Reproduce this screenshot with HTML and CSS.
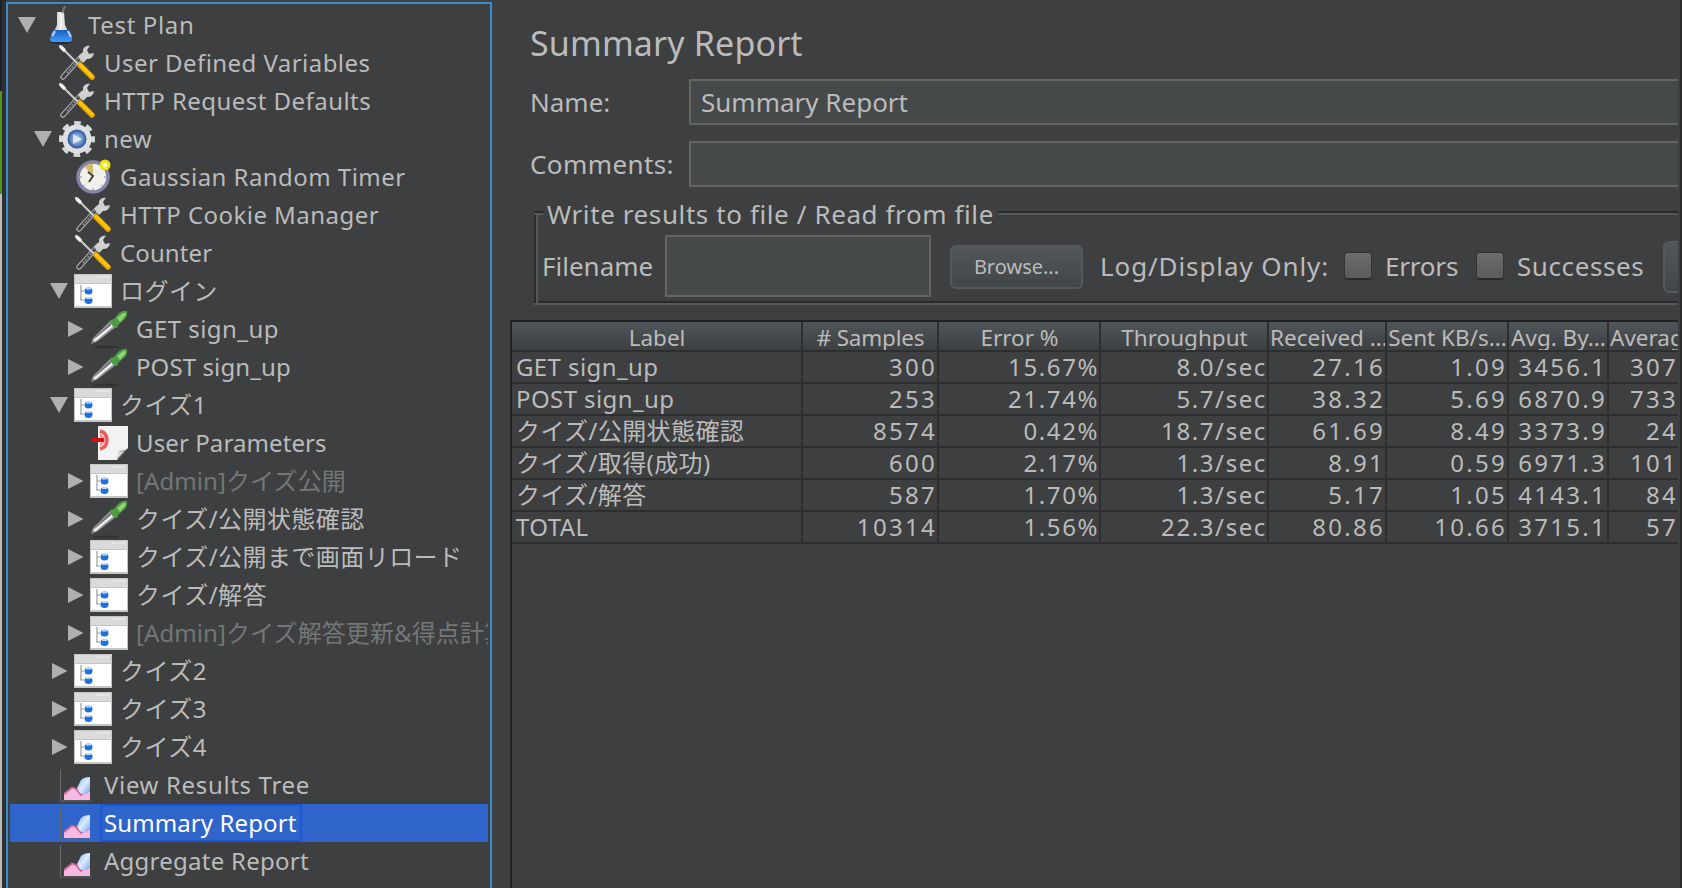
FILE: index.html
```html
<!DOCTYPE html>
<html lang="ja">

<head>
    <meta charset="UTF-8">
    <title>Summary Report</title>
    <link rel="stylesheet" href="styles.css">
</head>

<body>

    <!-- Icons -->
    <svg class="defs">
        <defs>
            <linearGradient id="blue" x1="0" y1="0" x2="0" y2="1">
                <stop offset="0" stop-color="#1b5fc0" />
                <stop offset="1" stop-color="#3d9cff" />
            </linearGradient>
            <linearGradient id="sky" x1="0" y1="0" x2="1" y2="1">
                <stop offset="0" stop-color="#7fb0ee" />
                <stop offset="0.5" stop-color="#dcecff" />
                <stop offset="1" stop-color="#6f9fe6" />
            </linearGradient>
            <linearGradient id="glass" x1="0" y1="0" x2="1" y2="0">
                <stop offset="0" stop-color="#9a9c9c" />
                <stop offset="0.5" stop-color="#f2f2f2" />
                <stop offset="1" stop-color="#a8aaaa" />
            </linearGradient>
            <radialGradient id="ball">
                <stop offset="0" stop-color="#b9cdea" />
                <stop offset="0.6" stop-color="#6b91c9" />
                <stop offset="1" stop-color="#27509b" />
            </radialGradient>
        </defs>
        <symbol id="down" viewBox="0 0 18 18"><path d="M0 1h18L9 17z" fill="#afb1b1" /></symbol>
        <symbol id="right" viewBox="0 0 18 18"><path d="M2 1l15.500 8L2 17z" fill="#afb1b1" /></symbol>
        <symbol id="flask" viewBox="0 0 38 38">
            <ellipse cx="19" cy="36" rx="11" ry="2" fill="#252c38" />
            <path d="M15 6h7l1 13 7 14q0 3-5 3H13q-5 0-5-3l7-14z" fill="url(#glass)" />
            <path d="M12 24h14l4 9q0 3-5 3H13q-5 0-5-3z" fill="url(#blue)" />
            <path d="M10 30l3-5M26 25l3 6" stroke="#9dc9ff" stroke-width="2.500" />
            <path d="M20 7l3-7" stroke="#77797a" stroke-width="2" />
        </symbol>
        <symbol id="tools" viewBox="0 0 38 38">
            <path d="M5 33L24 12" stroke="#a7a9a9" stroke-width="5.500" stroke-linecap="round" />
            <path d="M5 33L22 14" stroke="#3a3c3e" stroke-width="3" stroke-linecap="round" />
            <path d="M9 29L21 15" stroke="#a7a9a9" stroke-width="1.200" stroke-dasharray="2 1.500" />
            <path d="M20 13l5-5q-1-6 7-6.500l-3 4.500 2 4 5-1q-1 6-7 6l-4 4z" fill="#cfd1d1" />
            <path d="M2 2l18 18" stroke="#c8caca" stroke-width="2.200" stroke-linecap="round" />
            <path d="M3 3l3 3" stroke="#f2f2f2" stroke-width="3.500" stroke-linecap="round" />
            <path d="M22 21l12 12" stroke="#e8a400" stroke-width="5.500" stroke-linecap="round" />
            <path d="M22 20.500l12 12" stroke="#ffc61a" stroke-width="2.500" stroke-linecap="round" />
        </symbol>
        <symbol id="gear" viewBox="0 0 38 38">
            <circle cx="19" cy="19" r="15.500" fill="none" stroke="#d5d6d7" stroke-width="5" stroke-dasharray="6.500 5.673" stroke-dashoffset="3.250" />
            <circle cx="19" cy="19" r="14.500" fill="#dedfe0" />
            <circle cx="19" cy="19" r="9.500" fill="url(#ball)" />
            <path d="M15 14l9 5-9 5z" fill="#dfe8f4" />
        </symbol>
        <symbol id="timer" viewBox="0 0 38 38">
            <circle cx="19" cy="19" r="15" fill="#f1f0ec" stroke="#8484a6" stroke-width="3.500" />
            <path d="M19 19L11 9q4-4 8-3z" fill="#d6b869" />
            <path d="M14 14l5 4-4 6" stroke="#44443f" stroke-width="2" fill="none" />
            <path d="M19 30v2M30 19h2M6 19h2M10 28l1-1M28 28l-1-1" stroke="#aaa" stroke-width="1.500" />
            <circle cx="31" cy="7" r="5.500" fill="#eee013" />
            <circle cx="31" cy="7" r="2.500" fill="#fffbb0" />
        </symbol>
        <symbol id="tree-icon" viewBox="0 0 38 38">
            <path d="M0 2h38v34H0z" fill="#c4c5c5" />
            <path d="M1 3h36v8H1z" fill="#dadada" />
            <path d="M1 12h36v22H1z" fill="#fff" />
            <path d="M22 5h13" stroke="#f0f0f0" stroke-width="1.500" stroke-dasharray="2 1.500" />
            <path d="M7 13v15M7 19h3M6 28h4" stroke="#9a9a9a" stroke-width="1.200" fill="none" />
            <ellipse cx="14.500" cy="19" rx="4" ry="3.500" fill="#1d71df" />
            <ellipse cx="14.500" cy="28.500" rx="4" ry="3.500" fill="#1d71df" />
            <path d="M12 16.500h5M12 26h5" stroke="#b5d8ff" stroke-width="2" />
        </symbol>
        <symbol id="dropper" viewBox="0 0 38 38">
            <ellipse cx="16" cy="37" rx="13" ry="1.500" fill="#303234" />
            <path d="M1 34l2-6L20 11l6 6L8 31z" fill="#8f9191" />
            <path d="M6 28L21 14.500" stroke="#4a4c4d" stroke-width="1.200" />
            <path d="M4 31L23 15" stroke="#efefef" stroke-width="2.500" />
            <path d="M20 10l4-1 5-6q5-3 8-2 1 4-2 8l-6 5-2 4q-6-1-7-8z" fill="#4f9c44" />
            <path d="M27 8l6-5q3-1 3 2l-6 7z" fill="#8ed272" />
        </symbol>
        <symbol id="params" viewBox="0 0 38 38">
            <path d="M8 2h30v22l-11 12H8z" fill="#f2f2f2" />
            <path d="M38 24q-3 3-9 3l-2 9z" fill="#77797a" />
            <path d="M34 27q-4 1-6 0 1 3-1 8z" fill="#ddd" />
            <path d="M10 7q7 2 7 9t-7 9" stroke="#ea5b5b" stroke-width="3.500" fill="none" />
            <path d="M1 16h12" stroke="#cf1010" stroke-width="4" />
            <path d="M10 9l7 7-7 7z" fill="#ef7070" opacity=".7" />
            <path d="M3 16h11" stroke="#cf1010" stroke-width="3.500" />
        </symbol>
        <symbol id="graph" viewBox="0 0 38 38">
            <path d="M2.500 3v32H34" stroke="#646668" stroke-width="1.200" fill="none" />
            <path d="M6 34v-7l9-6 6 3 6 4 5-3v9z" fill="#f5b9e4" />
            <path d="M6 28l8-6.500 4 1.500 5 6 8-4" stroke="#c9608e" stroke-width="1.800" fill="none" />
            <path d="M19 22l4-8q3-3 9-3v14l-6 4-4-2z" fill="url(#sky)" />
        </symbol>
    </svg>

    <div class="app">
        <div class="edge">
            <div class="edge-dark"></div>
            <div class="edge-green"></div>
            <div class="edge-light"></div>
        </div>

        <ul class="tree">
            <li class="l0 wide"><svg class="arrow"><use href="#down" /></svg><svg class="icon"><use href="#flask" /></svg><span>Test Plan</span></li>
            <li class="l1"><i class="arrow"></i><svg class="icon"><use href="#tools" /></svg><span>User Defined Variables</span></li>
            <li class="l1"><i class="arrow"></i><svg class="icon"><use href="#tools" /></svg><span>HTTP Request Defaults</span></li>
            <li class="l1"><svg class="arrow"><use href="#down" /></svg><svg class="icon"><use href="#gear" /></svg><span>new</span></li>
            <li class="l2"><i class="arrow"></i><svg class="icon"><use href="#timer" /></svg><span>Gaussian Random Timer</span></li>
            <li class="l2"><i class="arrow"></i><svg class="icon"><use href="#tools" /></svg><span>HTTP Cookie Manager</span></li>
            <li class="l2 tight"><i class="arrow"></i><svg class="icon"><use href="#tools" /></svg><span>Counter</span></li>
            <li class="l2"><svg class="arrow"><use href="#down" /></svg><svg class="icon"><use href="#tree-icon" /></svg><span>ログイン</span></li>
            <li class="l3"><svg class="arrow"><use href="#right" /></svg><svg class="icon"><use href="#dropper" /></svg><span>GET sign_up</span></li>
            <li class="l3 tight"><svg class="arrow"><use href="#right" /></svg><svg class="icon"><use href="#dropper" /></svg><span>POST sign_up</span></li>
            <li class="l2"><svg class="arrow"><use href="#down" /></svg><svg class="icon"><use href="#tree-icon" /></svg><span>クイズ1</span></li>
            <li class="l3 tight"><i class="arrow"></i><svg class="icon"><use href="#params" /></svg><span>User Parameters</span></li>
            <li class="l3 tight disabled"><svg class="arrow"><use href="#right" /></svg><svg class="icon"><use href="#tree-icon" /></svg><span>[Admin]クイズ公開</span></li>
            <li class="l3"><svg class="arrow"><use href="#right" /></svg><svg class="icon"><use href="#dropper" /></svg><span>クイズ/公開状態確認</span></li>
            <li class="l3"><svg class="arrow"><use href="#right" /></svg><svg class="icon"><use href="#tree-icon" /></svg><span>クイズ/公開まで画面リロード</span></li>
            <li class="l3"><svg class="arrow"><use href="#right" /></svg><svg class="icon"><use href="#tree-icon" /></svg><span>クイズ/解答</span></li>
            <li class="l3 tight disabled"><svg class="arrow"><use href="#right" /></svg><svg class="icon"><use href="#tree-icon" /></svg><span>[Admin]クイズ解答更新&amp;得点計算</span></li>
            <li class="l2"><svg class="arrow"><use href="#right" /></svg><svg class="icon"><use href="#tree-icon" /></svg><span>クイズ2</span></li>
            <li class="l2"><svg class="arrow"><use href="#right" /></svg><svg class="icon"><use href="#tree-icon" /></svg><span>クイズ3</span></li>
            <li class="l2"><svg class="arrow"><use href="#right" /></svg><svg class="icon"><use href="#tree-icon" /></svg><span>クイズ4</span></li>
            <li class="l1 wide"><i class="arrow"></i><svg class="icon"><use href="#graph" /></svg><span>View Results Tree</span></li>
            <li class="l1 tight selected"><i class="arrow"></i><svg class="icon"><use href="#graph" /></svg><span>Summary Report</span></li>
            <li class="l1"><i class="arrow"></i><svg class="icon"><use href="#graph" /></svg><span class="aggregate">Aggregate Report</span></li>
        </ul>

        <main>
            <h1>Summary Report</h1>
            <div class="field">
                <label>Name:</label>
                <div class="input">Summary Report</div>
            </div>
            <div class="field">
                <label class="comments">Comments:</label>
                <div class="input"></div>
            </div>

            <div class="group">
                <div class="group-title"><span>Write results to file / Read from file</span></div>
                <div class="group-body">
                    <label class="filename">Filename</label>
                    <div class="file-input"></div>
                    <div class="button">Browse...</div>
                    <span class="log">Log/Display Only:</span>
                    <i class="check"></i>
                    <span class="errors">Errors</span>
                    <i class="check"></i>
                    <span class="successes">Successes</span>
                    <div class="button configure"></div>
                </div>
            </div>

            <div class="results">
                <table>
                    <colgroup>
                        <col class="c1"><col class="c2"><col class="c3"><col class="c4">
                        <col class="c5"><col class="c6"><col class="c7"><col class="c8">
                    </colgroup>
                    <thead>
                        <tr><th>Label</th><th class="samples"># Samples</th><th>Error %</th><th>Throughput</th><th>Received ...</th><th>Sent KB/s...</th><th>Avg. By...</th><th>Average</th></tr>
                    </thead>
                    <tbody>
                        <tr><td>GET sign_up</td><td>300</td><td class="unit">15.67%</td><td class="unit">8.0/sec</td><td>27.16</td><td>1.09</td><td>3456.1</td><td>307</td></tr>
                        <tr><td>POST sign_up</td><td>253</td><td class="unit">21.74%</td><td class="unit">5.7/sec</td><td>38.32</td><td>5.69</td><td>6870.9</td><td>733</td></tr>
                        <tr><td>クイズ/公開状態確認</td><td>8574</td><td class="unit">0.42%</td><td class="unit">18.7/sec</td><td>61.69</td><td>8.49</td><td>3373.9</td><td>24</td></tr>
                        <tr><td>クイズ/取得(成功)</td><td>600</td><td class="unit">2.17%</td><td class="unit">1.3/sec</td><td>8.91</td><td>0.59</td><td>6971.3</td><td>101</td></tr>
                        <tr><td>クイズ/解答</td><td>587</td><td class="unit">1.70%</td><td class="unit">1.3/sec</td><td>5.17</td><td>1.05</td><td>4143.1</td><td>84</td></tr>
                        <tr><td>TOTAL</td><td>10314</td><td class="unit">1.56%</td><td class="unit">22.3/sec</td><td>80.86</td><td>10.66</td><td>3715.1</td><td>57</td></tr>
                    </tbody>
                </table>
            </div>
        </main>
        <div class="right-edge"></div>
    </div>

</body>

</html>
```
FILE: styles.css
```css
*,
*::before,
*::after {
    box-sizing: border-box;
}

body {
    margin: 0;
    background-color: #3d3f40;
    color: #bbbbbb;
    font-family: "Noto Sans", "Noto Sans CJK JP", sans-serif;
    font-size: 24px;
    overflow: hidden;
}

.defs {
    position: absolute;
    width: 0;
    height: 0;
}

.app {
    display: flex;
    width: 1682px;
    height: 888px;
    overflow: hidden;
}

/* Sliver of the window behind */
.edge {
    width: 6px;
    flex: none;
    border-right: 4px solid #2f302f;
}

.edge-dark {
    height: 91px;
    background-color: #1d2226;
}

.edge-green {
    height: 103px;
    background-color: #4f951c;
}

.edge-light {
    height: 694px;
    background-color: #bdbdbd;
}

/* Tree */
.tree {
    width: 486px;
    height: 900px;
    flex: none;
    margin: 2px 0 0;
    padding: 2px 2px 0;
    list-style: none;
    border: 2px solid #3c8ccb;
    overflow: hidden;
}

.tree li {
    display: flex;
    align-items: center;
    height: 38px;
    white-space: nowrap;
    letter-spacing: 0.45px;
    overflow: hidden;
}

.tree .l0 {
    padding-left: 8px;
}

.tree .l1 {
    padding-left: 24px;
}

.tree .l2 {
    padding-left: 40px;
}

.tree .l3 {
    padding-left: 56px;
}

.tree .tight {
    letter-spacing: 0.1px;
}

.tree .wide {
    letter-spacing: 0.65px;
}

.aggregate {
    letter-spacing: 0.25px;
}

.tree span {
    line-height: 36px;
    padding: 0 3px;
    border: 1px solid transparent;
}

.arrow {
    width: 18px;
    height: 18px;
    flex: none;
    margin-right: 6px;
}

.icon {
    width: 38px;
    height: 38px;
    flex: none;
    margin-right: 4px;
}

.disabled {
    color: #747677;
}

.selected {
    background-color: #2f65ca;
    color: #fff;
}

.tree .selected span {
    border: 2px solid #1d56d6;
    padding: 0 4px 0 2px;
    line-height: 34px;
}

/* Report panel */
main {
    width: 1186px;
    flex: none;
    overflow: hidden;
    font-size: 26px;
    white-space: nowrap;
}

h1 {
    margin: 19px 0 12px 38px;
    font-size: 34px;
    font-weight: normal;
    line-height: 48px;
    letter-spacing: 0.15px;
}

.field {
    display: flex;
    align-items: center;
    height: 46px;
    margin: 0 0 16px 38px;
}

.field label {
    width: 159px;
    flex: none;
}

.comments {
    letter-spacing: 0.4px;
}

.input,
.file-input {
    background-color: #45494a;
    border: 2px solid #646464;
}

.input {
    flex: 1;
    height: 46px;
    line-height: 42px;
    padding-left: 10px;
    border-right: none;
}

.group {
    height: 105px;
    margin: -3px 0 15px 42px;
    border-bottom: 2px solid #54585a;
    background:
        linear-gradient(#292b2c, #292b2c) 0 11px / 2px 100% no-repeat,
        linear-gradient(#54585a, #54585a) 2px 13px / 2px 100% no-repeat,
        linear-gradient(#292b2c, #292b2c) 0 100% / 100% 2px no-repeat;
}

.group-title {
    display: flex;
    align-items: center;
    height: 26px;
    line-height: 26px;
    letter-spacing: 0.6px;
}

.group-title::before,
.group-title::after {
    content: "";
    width: 10px;
    height: 4px;
    background-color: #292b2c;
    border-bottom: 2px solid #54585a;
}

.group-title::after {
    flex: 1;
}

.group-title span {
    padding: 2px 4px 0 3px;
}

.group-body {
    display: flex;
    align-items: center;
    height: 66px;
    margin-top: 7px;
    padding-left: 8px;
}

.group-body > * {
    flex: none;
}

.filename {
    width: 123px;
}

.file-input {
    width: 266px;
    height: 62px;
    margin-right: 19px;
}

.button {
    width: 133px;
    height: 44px;
    margin-top: 2px;
    border: 2px solid #55595b;
    border-radius: 6px;
    background: linear-gradient(#525759, #414648);
    font-size: 20px;
    line-height: 39px;
    text-align: center;
}

.log {
    width: 244px;
    margin-left: 17px;
    letter-spacing: 0.9px;
}

.check {
    width: 28px;
    height: 28px;
    border: 1px solid #313334;
    border-bottom: 2px solid #2a2b2c;
    border-radius: 4px;
    background: linear-gradient(#6b6b6b, #5c5c5c);
}

.errors {
    width: 91px;
    margin-left: 13px;
    letter-spacing: -0.2px;
}

.successes {
    width: 146px;
    margin-left: 13px;
    letter-spacing: 0.6px;
}

.configure {
    height: 52px;
    width: 60px;
}

/* Results table */
.results {
    height: 568px;
    margin-left: 18px;
    border: solid #1f2122;
    border-width: 2px 0 0 2px;
    font-size: 24px;
}

table {
    width: 1166px;
    table-layout: fixed;
    border-collapse: collapse;
}

.c1 { width: 290px; }
.c2 { width: 136px; }
.c3 { width: 162px; }
.c4 { width: 168px; }
.c5 { width: 118px; }
.c6 { width: 122px; }
.c7 { width: 100px; }
.c8 { width: 70px; }

th,
td {
    padding: 0;
    overflow: hidden;
    border: solid #2c2e2f;
    border-width: 0 2px 2px 0;
}

th {
    height: 29px;
    padding: 2px 0 0 1px;
    font-size: 22.5px;
    font-weight: normal;
    line-height: 25px;
    background: linear-gradient(#50565a, #3d3f40);
}

.samples {
    letter-spacing: -0.2px;
}

td {
    height: 32px;
    line-height: 30px;
    text-align: right;
    letter-spacing: 2.3px;
}

.unit {
    letter-spacing: 1.6px;
}

td:first-child {
    text-align: left;
    padding-left: 4px;
    letter-spacing: 0.4px;
}

/* Cut off by the window edge */
th:last-child,
td:last-child {
    border-right: none;
}

th:last-child {
    text-align: left;
}

.right-edge {
    width: 4px;
    border-left: 2px solid #3d3f40;
    border-right: 2px solid #292b2c;
}
```
